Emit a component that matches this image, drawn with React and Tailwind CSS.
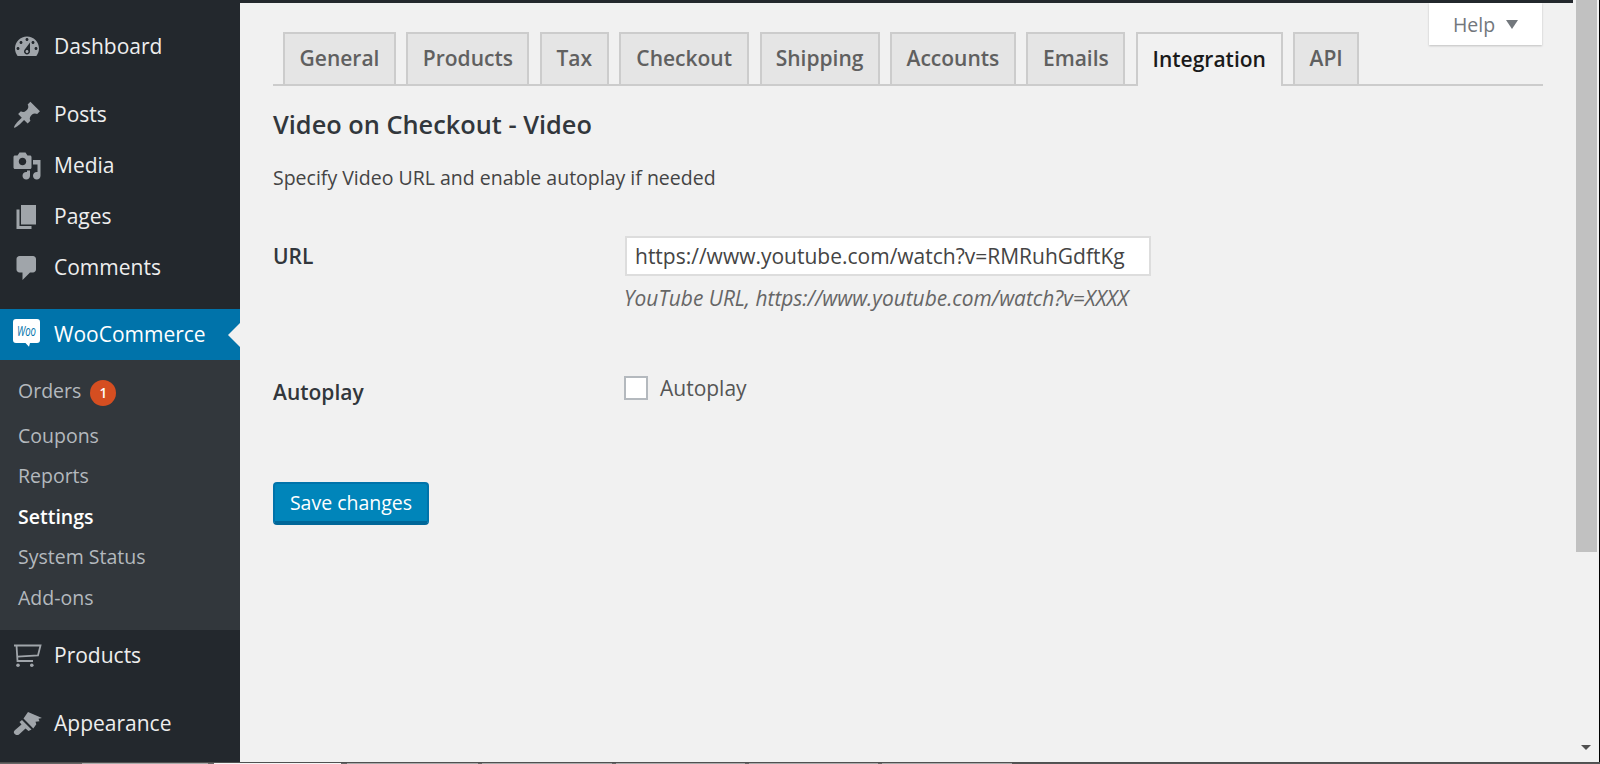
import React from 'react';

const ICONS = {
    dashboard: "M3.76 16h12.48c1.1-1.37 1.76-3.11 1.76-5 0-4.42-3.58-8-8-8s-8 3.58-8 8c0 1.89.66 3.63 1.76 5zM10 4c.55 0 1 .45 1 1s-.45 1-1 1-1-.45-1-1 .45-1 1-1zM6 6c.55 0 1 .45 1 1s-.45 1-1 1-1-.45-1-1 .45-1 1-1zm8 0c.55 0 1 .45 1 1s-.45 1-1 1-1-.45-1-1 .45-1 1-1zm-5.37 5.55L12 7v6c0 1.1-.9 2-2 2s-2-.9-2-2c0-.57.24-1.08.63-1.45zM4 10c.55 0 1 .45 1 1s-.45 1-1 1-1-.45-1-1 .45-1 1-1zm12 0c.55 0 1 .45 1 1s-.45 1-1 1-1-.45-1-1 .45-1 1-1zm-5 3c0-.55-.45-1-1-1s-1 .45-1 1 .45 1 1 1 1-.45 1-1z",
    posts: "M10.44 3.02l1.82-1.82 6.36 6.35-1.83 1.82c-1.05-.68-2.48-.57-3.41.36l-.75.75c-.92.93-1.04 2.35-.35 3.41l-1.83 1.82-2.41-2.41-2.8 2.79c-.42.42-3.38 2.71-3.8 2.29s1.86-3.39 2.28-3.81l2.79-2.79L4.1 9.36l1.83-1.82c1.05.69 2.48.57 3.4-.36l.75-.75c.93-.92 1.05-2.35.36-3.41z",
    media: "M13 11V4c0-.55-.45-1-1-1h-1.67L9 1H5L3.67 3H2c-.55 0-1 .45-1 1v7c0 .55.45 1 1 1h10c.55 0 1-.45 1-1zM7 4.5c1.38 0 2.5 1.12 2.5 2.5S8.38 9.5 7 9.5 4.5 8.38 4.5 7 5.62 4.5 7 4.5zM14 6h5v10.5c0 1.38-1.12 2.5-2.5 2.5S14 17.88 14 16.5s1.12-2.5 2.5-2.5c.17 0 .34.02.5.05V9h-3V6zm-4 8.05V13h2v3.5c0 1.38-1.12 2.5-2.5 2.5S7 17.88 7 16.5 8.12 14 9.5 14c.17 0 .34.02.5.05z",
    pages: "M6 15V2h10v13H6zm-1 1h8v2H3V5h2v11z",
    comments: "M5 2h9c1.1 0 2 .9 2 2v7c0 1.1-.9 2-2 2h-2l-5 5v-5H5c-1.1 0-2-.9-2-2V4c0-1.1.9-2 2-2z",
};

const TABS = [
    { label: 'General', width: 'w-[113px]' },
    { label: 'Products', width: 'w-[123px]' },
    { label: 'Tax', width: 'w-[69px]' },
    { label: 'Checkout', width: 'w-[130px]' },
    { label: 'Shipping', width: 'w-[120px]' },
    { label: 'Accounts', width: 'w-[126px]' },
    { label: 'Emails', width: 'w-[99px]' },
    { label: 'Integration', width: 'w-[147px]', active: true },
    { label: 'API', width: 'w-[66px]' },
];

const SUBMENU = ['Coupons', 'Reports', 'Settings', 'System Status', 'Add-ons'];

// strip along the bottom edge, 1px of some window chrome
const BOTTOM_STRIP = [
    { width: 'w-[82px]', color: 'bg-[#666666]' },
    { width: 'w-[126px]', color: 'bg-[#aaaaaa]' },
    { width: 'w-[6px]', color: 'bg-[#666666]' },
    { width: 'w-[127px]', color: 'bg-[#f5f5f5]' },
    { width: 'w-[6px]', color: 'bg-[#666666]' },
    { width: 'w-[131px]', color: 'bg-[#aaaaaa]' },
    { width: 'w-[4px]', color: 'bg-[#666666]' },
    { width: 'w-[130px]', color: 'bg-[#aaaaaa]' },
    { width: 'w-[4px]', color: 'bg-[#666666]' },
    { width: 'w-[129px]', color: 'bg-[#aaaaaa]' },
    { width: 'w-[4px]', color: 'bg-[#666666]' },
    { width: 'w-[129px]', color: 'bg-[#aaaaaa]' },
    { width: 'w-[4px]', color: 'bg-[#666666]' },
    { width: 'w-[130px]', color: 'bg-[#aaaaaa]' },
];

const MenuIcon = ({ name }) => (
    <svg viewBox="0 0 20 20" className="w-[30px] h-[30px] shrink-0 fill-[#a0a5aa]">
        <path d={ICONS[name]} />
    </svg>
);

const CartIcon = () => (
    <svg viewBox="0 0 30 30" className="w-[30px] h-[30px] shrink-0 fill-[#a0a5aa]">
        <path d="M1 4.500h2.500l1 15.500h15.500M3.500 4.500h24l-2.500 10-20.500 1.200" fill="none" stroke="#a0a5aa" strokeWidth="1.800" />
        <circle cx="5" cy="24.300" r="1.800" />
        <circle cx="18.800" cy="24.300" r="1.800" />
    </svg>
);

const BrushIcon = () => (
    <svg viewBox="0 0 30 30" className="w-[30px] h-[30px] shrink-0 fill-[#a0a5aa]">
        <path d="M15 3l14 6-3.500.8 1 2.400-4 .6.800 2.400-3 4.200L10.500 9.500z" />
        <path d="M9 11l9.500 9.500-3 1.500-3-2.500-6.500 6c-1.500 1-3.800.8-5-1.500-.4-1 0-2 .8-2.800L8.500 15.500 6.500 13z" />
    </svg>
);

const WooIcon = () => (
    <svg viewBox="0 0 30 30" className="w-[30px] h-[30px] shrink-0 overflow-visible">
        <path d="M3-1h21a3 3 0 0 1 3 3v18a3 3 0 0 1-3 3h-7l-1 3.700-3.500-3.700H3a3 3 0 0 1-3-3V2a3 3 0 0 1 3-3z" fill="#fff" />
        <text x="4" y="16" textLength="19" lengthAdjust="spacingAndGlyphs" fontSize="15" fontStyle="italic" fontFamily="'Open Sans', sans-serif" fill="#0073aa">Woo</text>
    </svg>
);

const MenuRow = ({ children, label, className = 'pl-[12px] gap-[12px] text-[#eeeeee]' }) => (
    <div className={`flex items-center h-[51px] text-[21px] ${className}`}>
        <span className="shrink-0 flex">{children}</span>
        <span>{label}</span>
    </div>
);

const Sidebar = () => (
    <aside className="w-[240px] shrink-0 bg-[#23282d] pt-[21px]">
        <MenuRow label="Dashboard"><MenuIcon name="dashboard" /></MenuRow>
        <div className="h-[17px]" />
        <MenuRow label="Posts"><MenuIcon name="posts" /></MenuRow>
        <MenuRow label="Media"><MenuIcon name="media" /></MenuRow>
        <MenuRow label="Pages"><MenuIcon name="pages" /></MenuRow>
        <MenuRow label="Comments"><MenuIcon name="comments" /></MenuRow>
        <div className="h-[16px]" />
        <div className="relative">
            <MenuRow label="WooCommerce" className="bg-[#0073aa] text-white pl-[13px] gap-[11px]"><WooIcon /></MenuRow>
            <div className="absolute right-0 top-[14px] border-y-[12px] border-r-[12px] border-y-transparent border-r-[#f1f1f1]" />
        </div>
        <div className="h-[270px] bg-[#32373c] pt-[9px] text-[19.500px] text-[#b4b9be]">
            <div className="flex items-center h-[44px] mb-[2px] pl-[18px]">
                <span>Orders</span>
                <span className="ml-[9px] mt-[4px] w-[26px] h-[26px] rounded-full bg-[#d54e21] text-white text-[13.500px] font-semibold flex items-center justify-center">1</span>
            </div>
            {SUBMENU.map(item => (
                <div key={item} className={`flex items-center h-[40.500px] pl-[18px] ${item === 'Settings' ? 'font-semibold text-white' : ''}`}>
                    {item}
                </div>
            ))}
        </div>
        <MenuRow label="Products" className="pl-[13px] gap-[11px] text-[#eeeeee]"><CartIcon /></MenuRow>
        <div className="h-[17px]" />
        <MenuRow label="Appearance" className="pl-[13px] gap-[11px] text-[#eeeeee]"><BrushIcon /></MenuRow>
    </aside>
);

const TabBar = () => (
    <div className="flex gap-[10.400px] h-[54px] pl-[10px] border-b-2 border-[#cccccc]">
        {TABS.map(tab => (
            <div
                key={tab.label}
                className={`${tab.width} shrink-0 flex items-center justify-center border-2 border-b-0 border-[#cccccc] text-[21px] font-semibold ${tab.active ? 'h-[54px] bg-[#f1f1f1] text-[#1a1a1a]' : 'bg-[#e5e5e5] text-[#606060]'}`}
            >
                {tab.label}
            </div>
        ))}
    </div>
);

const ScrollTrack = () => (
    <div className="w-[27px] shrink-0 pl-[3px] pr-[3px] border-r border-black bg-[#f1f1f1] flex flex-col justify-between">
        <div className="h-[552px] w-[21px] bg-[#c1c1c1]" />
        <div className="mb-[12px] ml-[5px] w-0 h-0 border-x-[5px] border-t-[5px] border-x-transparent border-t-[#505050]" />
    </div>
);

const App = () => (
    <div className="w-[1600px] h-[764px] overflow-hidden flex flex-col bg-[#f1f1f1] font-['Open_Sans',sans-serif] text-[19.500px] text-[#444444]">
        <div className="flex h-[762px]">
            <Sidebar />
            <main className="flex-1 min-w-0">
                <div className="h-[3px] bg-[#23282d]" />
                <div className="relative pl-[33px] pr-[30px] pt-[29px]">
                    <div className="absolute top-0 right-[31px] w-[113px] h-[42px] pt-[1px] bg-white shadow-[0_1px_2px_rgba(0,0,0,0.2)] flex items-center justify-center gap-[11px] text-[19.500px] text-[#72777c]">
                        Help
                        <span className="w-0 h-0 border-x-[6px] border-t-[9px] border-x-transparent border-t-[#72777c]" />
                    </div>
                    <TabBar />
                    <h2 className="mt-[22px] text-[25.350px] leading-[32px] font-semibold text-[#32373c]">Video on Checkout - Video</h2>
                    <p className="mt-[23px] leading-[30px]">Specify Video URL and enable autoplay if needed</p>
                    <div className="flex mt-[43px]">
                        <label className="w-[352px] shrink-0 pt-[5px] text-[21px] font-semibold text-[#32373c]">URL</label>
                        <div>
                            <input
                                readOnly
                                value="https://www.youtube.com/watch?v=RMRuhGdftKg"
                                className="w-[526px] h-[40px] bg-white border-2 border-[#dddddd] pl-[8px] text-[21px] text-[#444444] outline-none"
                            />
                            <p className="mt-[7px] leading-[30px] text-[20.900px] italic text-[#666666] -ml-[1px]">YouTube URL, https://www.youtube.com/watch?v=XXXX</p>
                        </div>
                    </div>
                    <div className="flex mt-[63px]">
                        <label className="w-[351px] shrink-0 pt-[1px] text-[21px] font-semibold text-[#32373c]">Autoplay</label>
                        <div className="flex items-center gap-[12px] h-[24px] text-[21px] text-[#555555]">
                            <span className="w-[24px] h-[24px] bg-white border-2 border-[#b4b9be]" />
                            <span className="mt-[1px]">Autoplay</span>
                        </div>
                    </div>
                    <button className="block mt-[73px] w-[156px] h-[43px] pt-[1px] rounded-[4px] bg-[#0085ba] border-2 border-[#0073aa] border-b-[4px] border-b-[#006799] text-white text-[19.500px]">
                        Save changes
                    </button>
                </div>
            </main>
            <ScrollTrack />
        </div>
        <div className="h-[1px] bg-[#505050]" />
        <div className="flex h-[1px] bg-[#555555]">
            {BOTTOM_STRIP.map((seg, i) => <div key={i} className={`${seg.width} ${seg.color}`} />)}
        </div>
    </div>
);

export default App;
